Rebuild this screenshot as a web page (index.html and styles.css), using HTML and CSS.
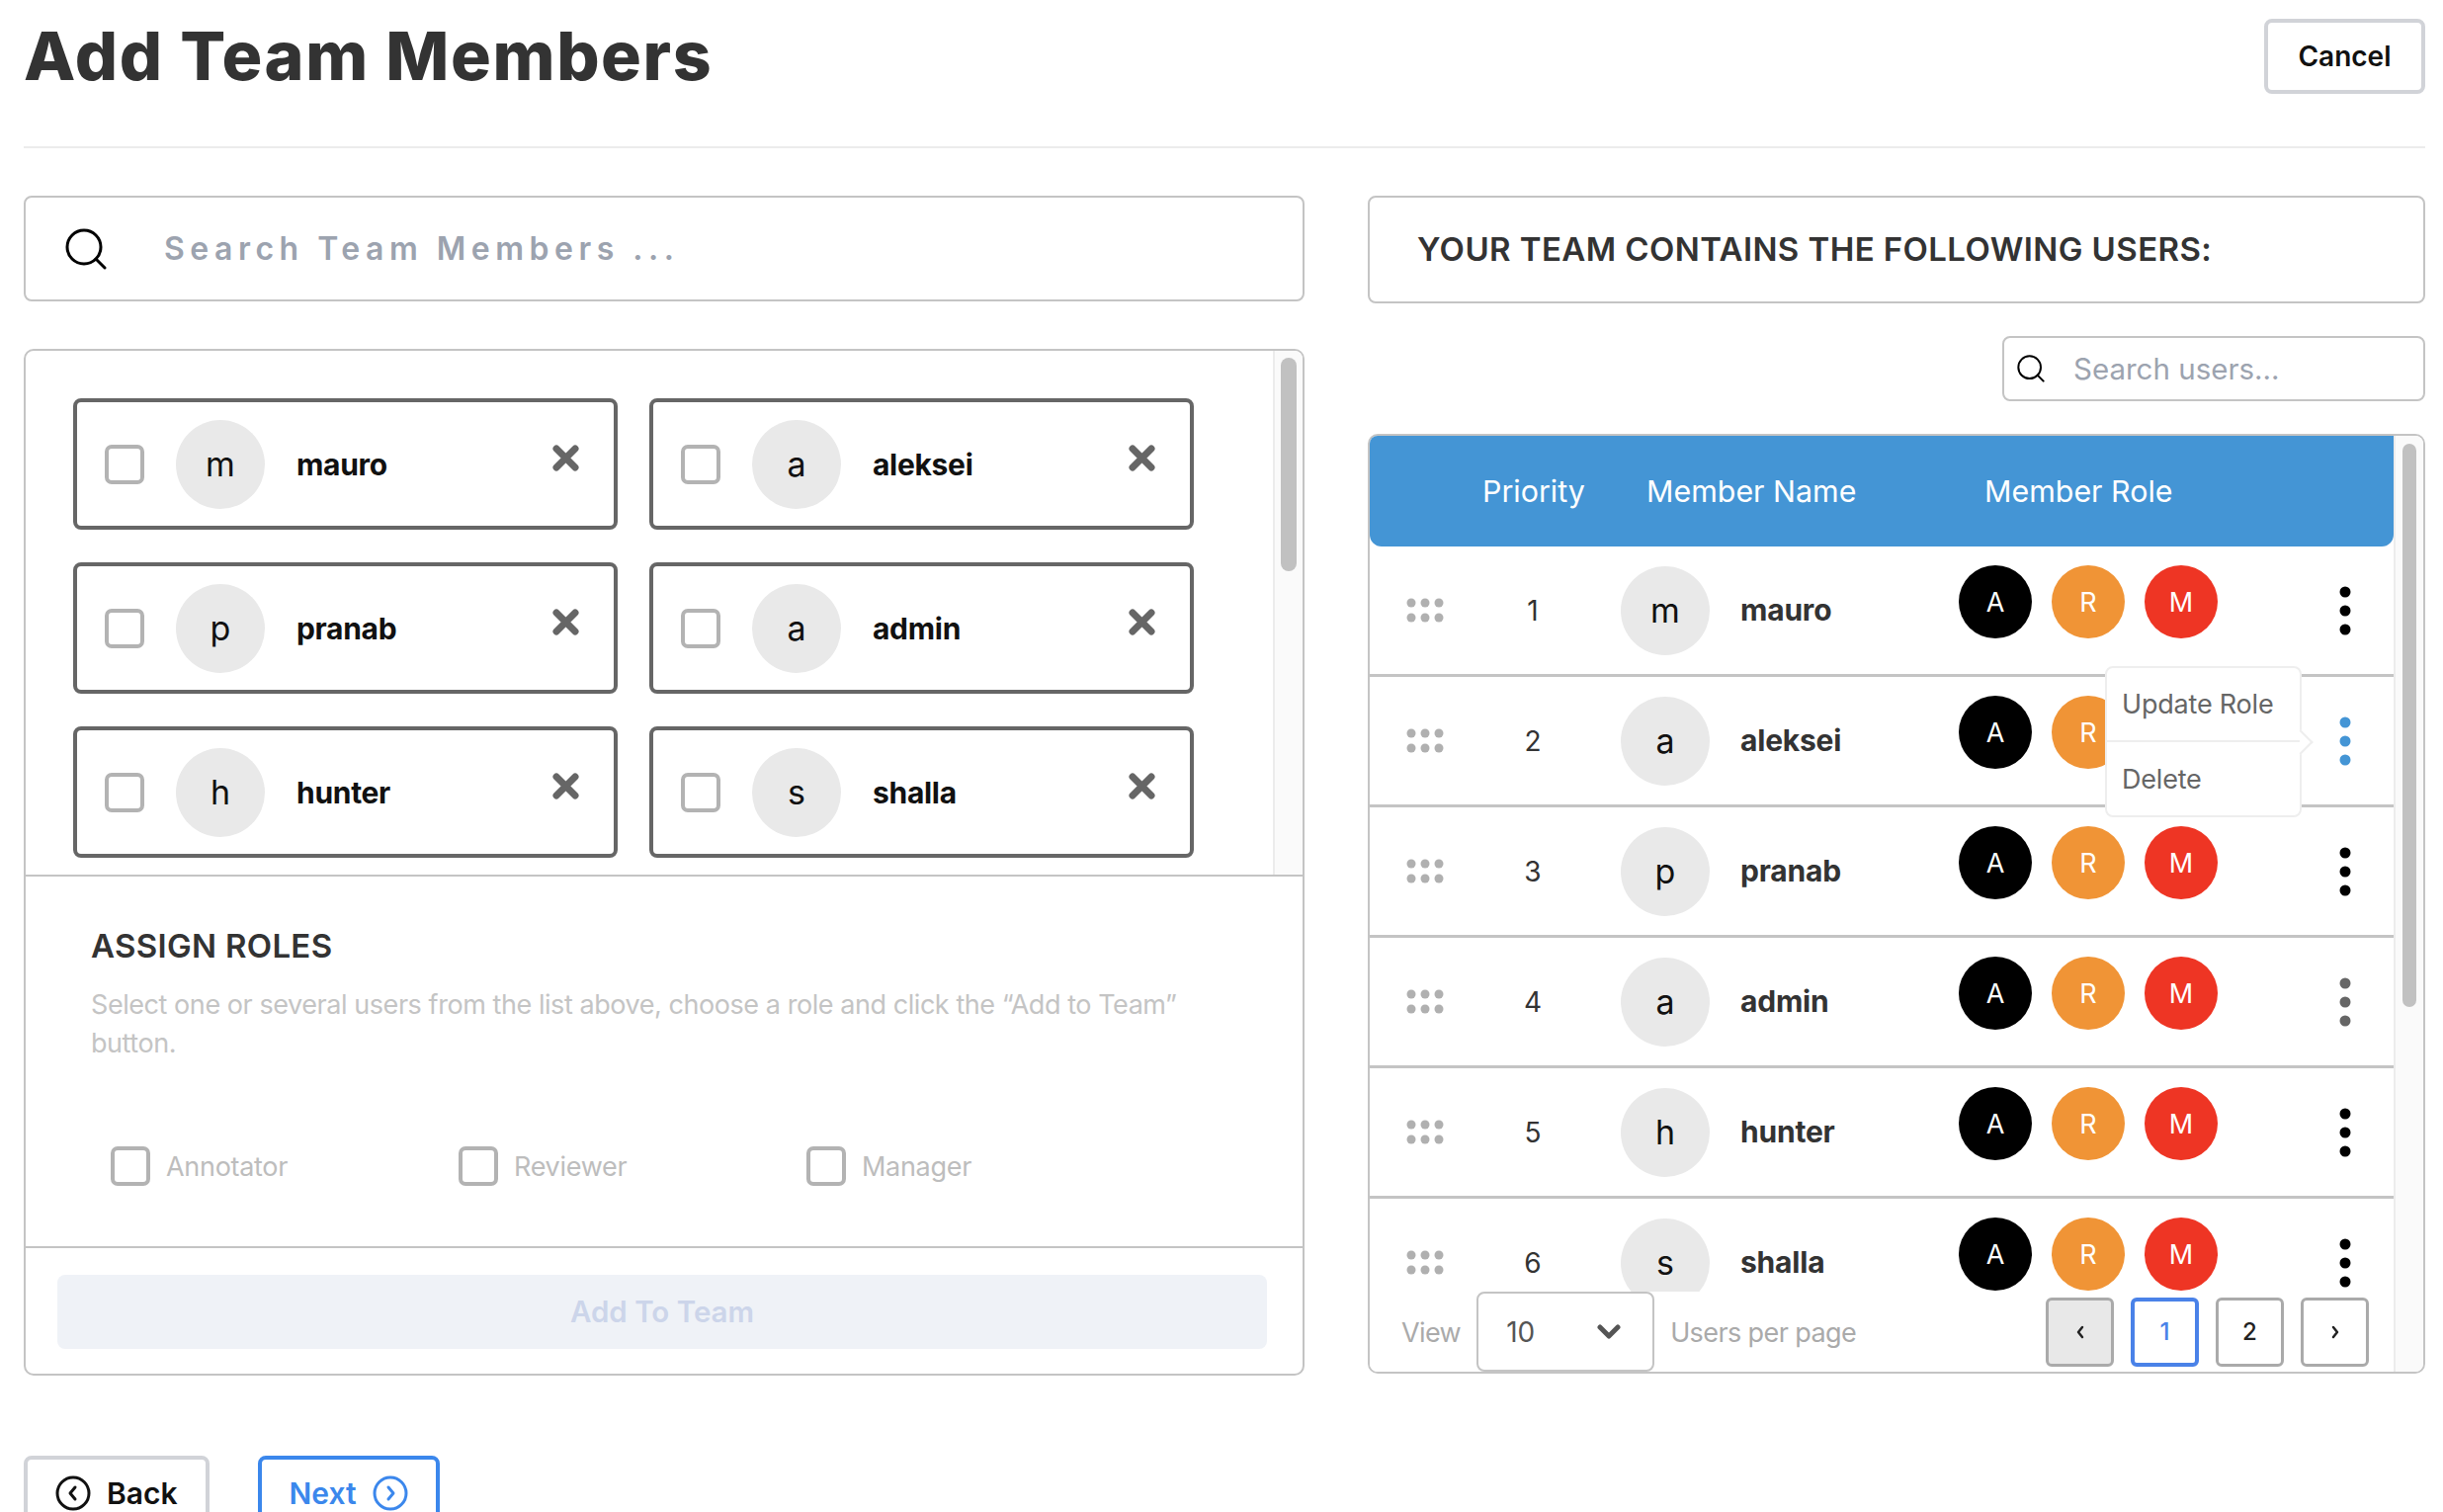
FILE: index.html
```html
<!DOCTYPE html>
<html>
<head>
    <title>Add Team Members</title>
    <link rel="stylesheet" href="styles.css">
</head>
<body>
    <svg class="defs" width="0" height="0">
        <symbol id="grip" viewBox="0 0 38 26">
            <circle cx="5" cy="5" r="4.5"/><circle cx="19" cy="5" r="4.5"/><circle cx="33" cy="5" r="4.5"/>
            <circle cx="5" cy="20" r="4.5"/><circle cx="19" cy="20" r="4.5"/><circle cx="33" cy="20" r="4.5"/>
        </symbol>
        <symbol id="kebab" viewBox="0 0 12 50">
            <circle cx="6" cy="6" r="5.5"/><circle cx="6" cy="25" r="5.5"/><circle cx="6" cy="44" r="5.5"/>
        </symbol>
        <symbol id="close" viewBox="0 0 27 27">
            <path d="M4 4 L23 23 M23 4 L4 23" fill="none" stroke="#666" stroke-width="7" stroke-linecap="round"/>
        </symbol>
        <symbol id="search" viewBox="0 0 42 42">
            <circle cx="19" cy="19" r="17" fill="none" stroke="#000" stroke-width="3"/>
            <path d="M31 31 L40 40" stroke="#000" stroke-width="3" stroke-linecap="round"/>
        </symbol>
    </svg>

    <div class="header">
        <h1>Add Team Members</h1>
        <button class="cancel">Cancel</button>
    </div>

    <div class="columns">
        <!-- Left side -->
        <div class="left">
            <div class="search-big">
                <svg class="search-icon"><use href="#search"/></svg>
                <span class="search-big-text">Search Team Members ...</span>
            </div>

            <div class="panel left-panel">
                <div class="list-wrap">
                    <div class="cards">
                        <div class="card"><span class="check"></span><span class="avatar">m</span><span class="card-name">mauro</span><svg class="close"><use href="#close"/></svg></div>
                        <div class="card"><span class="check"></span><span class="avatar">a</span><span class="card-name">aleksei</span><svg class="close"><use href="#close"/></svg></div>
                        <div class="card"><span class="check"></span><span class="avatar">p</span><span class="card-name">pranab</span><svg class="close"><use href="#close"/></svg></div>
                        <div class="card"><span class="check"></span><span class="avatar">a</span><span class="card-name">admin</span><svg class="close"><use href="#close"/></svg></div>
                        <div class="card"><span class="check"></span><span class="avatar">h</span><span class="card-name">hunter</span><svg class="close"><use href="#close"/></svg></div>
                        <div class="card"><span class="check"></span><span class="avatar">s</span><span class="card-name">shalla</span><svg class="close"><use href="#close"/></svg></div>
                    </div>
                    <div class="scroll-track list-track"><div class="scroll-thumb"></div></div>
                </div>

                <div class="assign">
                    <h2>ASSIGN ROLES</h2>
                    <p>Select one or several users from the list above, choose a role and click the “Add to Team” button.</p>
                    <div class="role-checks">
                        <label class="role-check"><span class="check"></span>Annotator</label>
                        <label class="role-check"><span class="check"></span>Reviewer</label>
                        <label class="role-check"><span class="check"></span>Manager</label>
                    </div>
                </div>

                <div class="add-row">
                    <button class="add-btn">Add To Team</button>
                </div>
            </div>

            <div class="nav">
                <button class="nav-btn back">
                    <svg class="nav-icon" viewBox="0 0 36 36"><circle cx="18" cy="18" r="16" fill="none" stroke="currentColor" stroke-width="3"/><path d="M20 12 L15 18 L20 24" fill="none" stroke="currentColor" stroke-width="3" stroke-linecap="round" stroke-linejoin="round"/></svg>
                    Back
                </button>
                <button class="nav-btn next">
                    Next
                    <svg class="nav-icon" viewBox="0 0 36 36"><circle cx="18" cy="18" r="16" fill="none" stroke="currentColor" stroke-width="3"/><path d="M16 12 L21 18 L16 24" fill="none" stroke="currentColor" stroke-width="3" stroke-linecap="round" stroke-linejoin="round"/></svg>
                </button>
            </div>
        </div>

        <!-- Right side -->
        <div class="right">
            <div class="team-title">YOUR TEAM CONTAINS THE FOLLOWING USERS:</div>

            <div class="search-row">
                <div class="search-small">
                    <svg class="search-icon-small"><use href="#search"/></svg>
                    <span>Search users...</span>
                </div>
            </div>

            <div class="panel table-panel">
                <div class="table-main">
                    <div class="table-clip">
                        <div class="thead">
                            <span>Priority</span>
                            <span>Member Name</span>
                            <span>Member Role</span>
                        </div>

                        <div class="trow">
                            <svg class="grip"><use href="#grip"/></svg>
                            <span class="num">1</span>
                            <div class="member"><span class="avatar">m</span><span class="member-name">mauro</span></div>
                            <div class="roles"><span class="role a">A</span><span class="role r">R</span><span class="role m">M</span></div>
                            <svg class="kebab"><use href="#kebab"/></svg>
                        </div>
                        <div class="trow">
                            <svg class="grip"><use href="#grip"/></svg>
                            <span class="num">2</span>
                            <div class="member"><span class="avatar">a</span><span class="member-name">aleksei</span></div>
                            <div class="roles"><span class="role a">A</span><span class="role r">R</span></div>
                            <svg class="kebab open"><use href="#kebab"/></svg>
                        </div>
                        <div class="trow">
                            <svg class="grip"><use href="#grip"/></svg>
                            <span class="num">3</span>
                            <div class="member"><span class="avatar">p</span><span class="member-name">pranab</span></div>
                            <div class="roles"><span class="role a">A</span><span class="role r">R</span><span class="role m">M</span></div>
                            <svg class="kebab"><use href="#kebab"/></svg>
                        </div>
                        <div class="trow">
                            <svg class="grip"><use href="#grip"/></svg>
                            <span class="num">4</span>
                            <div class="member"><span class="avatar">a</span><span class="member-name">admin</span></div>
                            <div class="roles"><span class="role a">A</span><span class="role r">R</span><span class="role m">M</span></div>
                            <svg class="kebab faded"><use href="#kebab"/></svg>
                        </div>
                        <div class="trow">
                            <svg class="grip"><use href="#grip"/></svg>
                            <span class="num">5</span>
                            <div class="member"><span class="avatar">h</span><span class="member-name">hunter</span></div>
                            <div class="roles"><span class="role a">A</span><span class="role r">R</span><span class="role m">M</span></div>
                            <svg class="kebab"><use href="#kebab"/></svg>
                        </div>
                        <div class="trow">
                            <svg class="grip"><use href="#grip"/></svg>
                            <span class="num">6</span>
                            <div class="member"><span class="avatar">s</span><span class="member-name">shalla</span></div>
                            <div class="roles"><span class="role a">A</span><span class="role r">R</span><span class="role m">M</span></div>
                            <svg class="kebab"><use href="#kebab"/></svg>
                        </div>

                        <div class="popup">
                            <div class="popup-item">Update Role</div>
                            <div class="popup-item">Delete</div>
                            <span class="popup-caret"></span>
                        </div>
                    </div>

                    <div class="table-foot">
                        <span class="foot-label">View</span>
                        <div class="select">
                            <span>10</span>
                            <svg class="chevron" viewBox="0 0 24 16"><path d="M3 3 L12 12 L21 3" fill="none" stroke="#555" stroke-width="5" stroke-linecap="round" stroke-linejoin="round"/></svg>
                        </div>
                        <span class="foot-label">Users per page</span>
                        <div class="pager">
                            <button class="page prev"><svg class="page-arrow" viewBox="0 0 12 16"><path d="M8 3 L4 8 L8 13" fill="none" stroke="#222" stroke-width="2.5" stroke-linecap="round" stroke-linejoin="round"/></svg></button>
                            <button class="page current">1</button>
                            <button class="page">2</button>
                            <button class="page"><svg class="page-arrow" viewBox="0 0 12 16"><path d="M4 3 L8 8 L4 13" fill="none" stroke="#222" stroke-width="2.5" stroke-linecap="round" stroke-linejoin="round"/></svg></button>
                        </div>
                    </div>
                </div>
                <div class="scroll-track table-track"><div class="scroll-thumb"></div></div>
            </div>
        </div>
    </div>
</body>
</html>
```

FILE: styles.css
```css
* {
    box-sizing: border-box;
}

html, body {
    height: 1530px;
    overflow: hidden;
}

body {
    margin: 0;
    padding: 0 18px 0 24px;
    background: #fff;
    color: #333;
    font-family: Inter, "Liberation Sans", sans-serif;
}

button {
    font-family: inherit;
    background: #fff;
    cursor: pointer;
}

.defs {
    position: absolute;
}

/* Header */
.header {
    display: flex;
    justify-content: space-between;
    align-items: center;
    height: 150px;
    padding: 20px 0 54px;
    border-bottom: 2px solid #ececec;
}

h1 {
    margin: -2px 0 0;
    font-size: 68px;
    font-weight: 800;
    letter-spacing: 1.6px;
    color: #333;
}

.cancel {
    width: 163px;
    height: 76px;
    border: 4px solid #d1d3d8;
    border-radius: 8px;
    font-size: 28px;
    font-weight: 600;
    color: #111;
}

.columns {
    display: grid;
    grid-template-columns: 1296px 1070px;
    gap: 64px;
    padding-top: 48px;
}

.panel {
    border: 2px solid #c4c4c4;
    border-radius: 10px;
    overflow: hidden;
}

/* Left side */
.search-big {
    display: flex;
    align-items: center;
    height: 107px;
    padding-left: 40px;
    border: 2px solid #c4c4c4;
    border-radius: 8px;
}

.search-icon {
    width: 42px;
    height: 42px;
}

.search-big-text {
    margin-left: 58px;
    font-size: 32px;
    font-weight: 600;
    letter-spacing: 5.5px;
    color: #9ca3af;
}

.left-panel {
    height: 1039px;
    margin-top: 48px;
}

.list-wrap {
    display: flex;
    height: 532px;
    overflow: hidden;
    border-bottom: 2px solid #c4c4c4;
}

.cards {
    display: grid;
    grid-template-columns: 551px 551px;
    grid-auto-rows: 133px;
    gap: 33px 32px;
    flex: 1;
    padding: 48px 0 0 48px;
}

.card {
    display: flex;
    align-items: center;
    padding-left: 28px;
    border: 4px solid #666;
    border-radius: 8px;
}

.check {
    flex: none;
    width: 40px;
    height: 40px;
    border: 4px solid #b3b3b3;
    border-radius: 7px;
}

.avatar {
    display: flex;
    flex: none;
    align-items: center;
    justify-content: center;
    width: 90px;
    height: 90px;
    border-radius: 50%;
    background: #e9e9e9;
    font-size: 34px;
    color: #111;
}

.card .avatar {
    margin-left: 32px;
}

.card-name {
    margin-left: 32px;
    font-size: 30px;
    font-weight: 650;
    letter-spacing: -0.3px;
    color: #111;
}

.close {
    width: 27px;
    height: 27px;
    margin: -12px 35px 0 auto;
}

.scroll-track {
    flex: none;
    background: #fafafa;
    border-left: 2px solid #ececec;
}

.scroll-thumb {
    border-radius: 8px;
    background: #c1c1c1;
}

.list-track {
    width: 30px;
    padding: 7px 6px 0;
}

.list-track .scroll-thumb {
    height: 216px;
}

.assign {
    height: 376px;
    padding: 50px 66px 0;
    border-bottom: 2px solid #c4c4c4;
}

h2 {
    margin: 0;
    font-size: 33px;
    font-weight: 600;
    letter-spacing: 0.3px;
    line-height: 40px;
    color: #333;
}

.assign p {
    margin: 20px 0 0;
    font-size: 27px;
    letter-spacing: -0.44px;
    line-height: 39px;
    color: #c4c4c4;
}

.role-checks {
    display: flex;
    margin-top: 85px;
    padding-left: 20px;
}

.role-check {
    display: flex;
    align-items: center;
    gap: 16px;
    width: 352px;
    font-size: 27px;
    letter-spacing: -0.3px;
    color: #bdbdbd;
}

.add-row {
    padding: 27px 36px 0 32px;
}

.add-btn {
    width: 100%;
    height: 75px;
    padding: 0 0 2px;
    border: none;
    border-radius: 8px;
    background: #eff2f7;
    font-size: 29.5px;
    font-weight: 600;
    color: #ccd5ea;
}

.nav {
    display: flex;
    gap: 49px;
    margin-top: 81px;
}

.nav-btn {
    display: flex;
    align-items: center;
    gap: 16px;
    height: 76px;
    padding: 0 28px;
    border: 4px solid #d1d3d8;
    border-radius: 8px;
    font-size: 30px;
    font-weight: 600;
    color: #111;
}

.nav-btn.next {
    border-color: #3b87ec;
    color: #3b87ec;
}

.nav-icon {
    width: 36px;
    height: 36px;
}

/* Right side */
.team-title {
    display: flex;
    align-items: center;
    height: 109px;
    padding: 0 0 2px 48px;
    border: 2px solid #c4c4c4;
    border-radius: 8px;
    font-size: 33px;
    font-weight: 600;
    letter-spacing: 0.4px;
    color: #333;
}

.search-row {
    display: flex;
    justify-content: flex-end;
    margin-top: 33px;
}

.search-small {
    display: flex;
    align-items: center;
    width: 428px;
    height: 66px;
    padding-left: 13px;
    border: 2px solid #c4c4c4;
    border-radius: 8px;
    font-size: 29.5px;
    color: #9ca3af;
}

.search-icon-small {
    width: 28px;
    height: 28px;
    margin-right: 29px;
}

.table-panel {
    display: flex;
    height: 951px;
    margin-top: 33px;
}

.table-main {
    display: flex;
    flex: 1;
    flex-direction: column;
    min-width: 0;
}

.table-clip {
    position: relative;
    height: 866px;
    overflow: hidden;
}

.thead {
    display: grid;
    grid-template-columns: 166px 342px 1fr;
    align-items: center;
    height: 112px;
    padding-left: 114px;
    border-radius: 0 0 12px 12px;
    background: #4495d5;
    font-size: 30.4px;
    color: #fff;
}

.trow {
    display: grid;
    grid-template-columns: 110px 110px 376px 1fr 24px;
    align-items: center;
    height: 132px;
    padding-right: 37px;
    border-bottom: 3px solid #c4c4c4;
}

.grip {
    width: 38px;
    height: 26px;
    margin-left: 37px;
    fill: #b0b0b0;
}

.num {
    text-align: center;
    font-size: 28px;
    color: #333;
}

.member {
    display: flex;
    align-items: center;
    padding-left: 34px;
}

.member-name {
    margin: 0 0 2px 31px;
    font-size: 30px;
    font-weight: 650;
    letter-spacing: -0.2px;
    color: #333;
}

.roles {
    display: flex;
    gap: 20px;
    align-self: start;
    margin-top: 19px;
}

.role {
    display: flex;
    align-items: center;
    justify-content: center;
    width: 74px;
    height: 74px;
    border-radius: 50%;
    font-size: 27px;
    color: #fff;
}

.role.a {
    background: #000;
}

.role.r {
    background: #f09436;
}

.role.m {
    background: #ee3524;
}

.kebab {
    justify-self: center;
    width: 12px;
    height: 50px;
    fill: #000;
}

.kebab.open {
    fill: #4495d5;
}

.kebab.faded {
    fill: #666;
}

.popup {
    position: absolute;
    z-index: 1;
    top: 233px;
    left: 744px;
    width: 199px;
    height: 153px;
    border: 2px solid #eee;
    border-radius: 8px;
    background: #fff;
}

.popup-item {
    display: flex;
    align-items: center;
    height: 75px;
    padding-left: 15px;
    font-size: 27px;
    letter-spacing: -0.2px;
    color: #666;
}

.popup-item:first-child {
    border-bottom: 2px solid #eee;
}

.popup-caret {
    position: absolute;
    z-index: -1;
    top: 66px;
    right: -10px;
    width: 18px;
    height: 18px;
    border-top: 2px solid #eee;
    border-right: 2px solid #eee;
    background: #fff;
    transform: rotate(45deg);
}

.table-foot {
    display: flex;
    flex: 1;
    align-items: center;
    padding-left: 32px;
    background: #fff;
}

.foot-label {
    padding-top: 2px;
    font-size: 27px;
    letter-spacing: -0.6px;
    color: #aaa;
}

.select {
    display: flex;
    align-items: center;
    justify-content: space-between;
    width: 180px;
    height: 100%;
    margin: 0 16px;
    padding: 0 32px 0 28px;
    border: 2px solid #c4c4c4;
    border-radius: 8px;
    font-size: 28px;
    color: #555;
}

.chevron {
    width: 24px;
    height: 16px;
}

.pager {
    display: flex;
    gap: 17px;
    margin-left: auto;
    margin-right: 25px;
}

.page {
    display: flex;
    align-items: center;
    justify-content: center;
    width: 69px;
    height: 70px;
    padding: 0;
    border: 3px solid #aaa;
    border-radius: 6px;
    font-size: 24px;
    font-weight: 500;
    color: #222;
}

.page.prev {
    background: #e8e8e8;
}

.page.current {
    border: 4px solid #4a82e8;
    color: #4a82e8;
}

.page-arrow {
    width: 12px;
    height: 16px;
}

.table-track {
    width: 30px;
    padding: 8px 7px 0;
}

.table-track .scroll-thumb {
    height: 570px;
}
```
